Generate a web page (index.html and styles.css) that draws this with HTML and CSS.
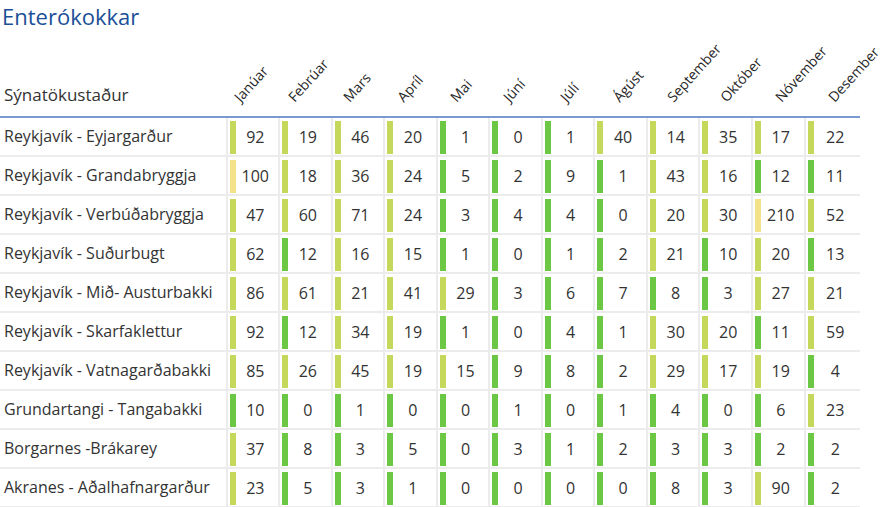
FILE: index.html
```html
<!DOCTYPE html>
<html lang="is">
<head>
<meta charset="utf-8">
<title>Enterókokkar</title>
<link rel="stylesheet" href="styles.css">
</head>
<body>
<h1 class="title">Enterókokkar</h1>
<div class="grid">
  <div class="row head">
    <div class="site-h">Sýnatökustaður</div>
    <div class="mh"><span class="rot">Janúar</span></div>
    <div class="mh"><span class="rot">Febrúar</span></div>
    <div class="mh"><span class="rot">Mars</span></div>
    <div class="mh"><span class="rot">Apríl</span></div>
    <div class="mh"><span class="rot">Mai</span></div>
    <div class="mh"><span class="rot">Júní</span></div>
    <div class="mh"><span class="rot">Júlí</span></div>
    <div class="mh"><span class="rot">Ágúst</span></div>
    <div class="mh"><span class="rot">September</span></div>
    <div class="mh"><span class="rot">Október</span></div>
    <div class="mh"><span class="rot">Nóvember</span></div>
    <div class="mh"><span class="rot">Desember</span></div>
  </div>
  <div class="row">
    <div class="site">Reykjavík - Eyjargarður</div>
    <div class="c y"><span>92</span></div><div class="c y"><span>19</span></div><div class="c y"><span>46</span></div><div class="c y"><span>20</span></div><div class="c g"><span>1</span></div><div class="c g"><span>0</span></div><div class="c g"><span>1</span></div><div class="c y"><span>40</span></div><div class="c y"><span>14</span></div><div class="c y"><span>35</span></div><div class="c y"><span>17</span></div><div class="c y"><span>22</span></div>
  </div>
  <div class="row">
    <div class="site">Reykjavík - Grandabryggja</div>
    <div class="c p"><span>100</span></div><div class="c y"><span>18</span></div><div class="c y"><span>36</span></div><div class="c y"><span>24</span></div><div class="c g"><span>5</span></div><div class="c g"><span>2</span></div><div class="c g"><span>9</span></div><div class="c g"><span>1</span></div><div class="c y"><span>43</span></div><div class="c y"><span>16</span></div><div class="c g"><span>12</span></div><div class="c g"><span>11</span></div>
  </div>
  <div class="row">
    <div class="site">Reykjavík - Verbúðabryggja</div>
    <div class="c y"><span>47</span></div><div class="c y"><span>60</span></div><div class="c y"><span>71</span></div><div class="c y"><span>24</span></div><div class="c g"><span>3</span></div><div class="c g"><span>4</span></div><div class="c g"><span>4</span></div><div class="c g"><span>0</span></div><div class="c y"><span>20</span></div><div class="c y"><span>30</span></div><div class="c p"><span>210</span></div><div class="c y"><span>52</span></div>
  </div>
  <div class="row">
    <div class="site">Reykjavík - Suðurbugt</div>
    <div class="c y"><span>62</span></div><div class="c g"><span>12</span></div><div class="c y"><span>16</span></div><div class="c y"><span>15</span></div><div class="c g"><span>1</span></div><div class="c g"><span>0</span></div><div class="c g"><span>1</span></div><div class="c g"><span>2</span></div><div class="c y"><span>21</span></div><div class="c g"><span>10</span></div><div class="c y"><span>20</span></div><div class="c g"><span>13</span></div>
  </div>
  <div class="row">
    <div class="site">Reykjavík - Mið- Austurbakki</div>
    <div class="c y"><span>86</span></div><div class="c y"><span>61</span></div><div class="c y"><span>21</span></div><div class="c y"><span>41</span></div><div class="c y"><span>29</span></div><div class="c g"><span>3</span></div><div class="c g"><span>6</span></div><div class="c g"><span>7</span></div><div class="c g"><span>8</span></div><div class="c g"><span>3</span></div><div class="c y"><span>27</span></div><div class="c y"><span>21</span></div>
  </div>
  <div class="row">
    <div class="site">Reykjavík - Skarfaklettur</div>
    <div class="c y"><span>92</span></div><div class="c g"><span>12</span></div><div class="c y"><span>34</span></div><div class="c y"><span>19</span></div><div class="c g"><span>1</span></div><div class="c g"><span>0</span></div><div class="c g"><span>4</span></div><div class="c g"><span>1</span></div><div class="c y"><span>30</span></div><div class="c y"><span>20</span></div><div class="c g"><span>11</span></div><div class="c y"><span>59</span></div>
  </div>
  <div class="row">
    <div class="site">Reykjavík - Vatnagarðabakki</div>
    <div class="c y"><span>85</span></div><div class="c y"><span>26</span></div><div class="c y"><span>45</span></div><div class="c y"><span>19</span></div><div class="c y"><span>15</span></div><div class="c g"><span>9</span></div><div class="c g"><span>8</span></div><div class="c g"><span>2</span></div><div class="c y"><span>29</span></div><div class="c y"><span>17</span></div><div class="c y"><span>19</span></div><div class="c g"><span>4</span></div>
  </div>
  <div class="row">
    <div class="site">Grundartangi - Tangabakki</div>
    <div class="c g"><span>10</span></div><div class="c g"><span>0</span></div><div class="c g"><span>1</span></div><div class="c g"><span>0</span></div><div class="c g"><span>0</span></div><div class="c g"><span>1</span></div><div class="c g"><span>0</span></div><div class="c g"><span>1</span></div><div class="c g"><span>4</span></div><div class="c g"><span>0</span></div><div class="c g"><span>6</span></div><div class="c y"><span>23</span></div>
  </div>
  <div class="row">
    <div class="site">Borgarnes -Brákarey</div>
    <div class="c y"><span>37</span></div><div class="c g"><span>8</span></div><div class="c g"><span>3</span></div><div class="c g"><span>5</span></div><div class="c g"><span>0</span></div><div class="c g"><span>3</span></div><div class="c g"><span>1</span></div><div class="c g"><span>2</span></div><div class="c g"><span>3</span></div><div class="c g"><span>3</span></div><div class="c g"><span>2</span></div><div class="c g"><span>2</span></div>
  </div>
  <div class="row">
    <div class="site">Akranes - Aðalhafnargarður</div>
    <div class="c y"><span>23</span></div><div class="c g"><span>5</span></div><div class="c g"><span>3</span></div><div class="c g"><span>1</span></div><div class="c g"><span>0</span></div><div class="c g"><span>0</span></div><div class="c g"><span>0</span></div><div class="c g"><span>0</span></div><div class="c g"><span>8</span></div><div class="c g"><span>3</span></div><div class="c y"><span>90</span></div><div class="c g"><span>2</span></div>
  </div>
</div>
</body>
</html>
```

FILE: styles.css
```css
* { box-sizing: border-box; }
html, body { margin: 0; padding: 0; background: #fff; }
body {
  font-family: "Open Sans", "Noto Sans", sans-serif;
  color: #333;
  overflow: hidden;
}
.title {
  margin: 1px 0 0 2px;
  font-size: 22px;
  font-weight: 400;
  line-height: 30px;
  color: #1b4f97;
}
.grid { width: 860px; }
.row {
  display: grid;
  grid-template-columns: 225.5px repeat(11, 52.55px) 1fr;
  height: 39px;
  border-bottom: 2px solid #ececec;
}
.row.head {
  height: 87px;
  border-bottom: 2px solid #7b9bd0;
}
.site-h {
  align-self: end;
  font-size: 17px;
  line-height: 22px;
  padding: 0 0 10px 4px;
}
.mh {
  display: flex;
  align-items: flex-end;
  padding-bottom: 11px;
}
.rot {
  display: block;
  flex: none;
  font-size: 14px;
  line-height: 16px;
  color: #262626;
  white-space: nowrap;
  transform-origin: 0 100%;
  transform: rotate(-48deg);
  margin-left: 17.4px;
}
.mh:nth-child(3) .rot { margin-left: 18.9px; }
.mh:nth-child(4) .rot { margin-left: 21.3px; }
.mh:nth-child(5) .rot { margin-left: 22.8px; }
.mh:nth-child(6) .rot { margin-left: 23.2px; }
.mh:nth-child(7) .rot { margin-left: 23.7px; }
.mh:nth-child(8) .rot { margin-left: 27.8px; }
.mh:nth-child(9) .rot { margin-left: 28.6px; }
.mh:nth-child(10) .rot { margin-left: 30px; }
.mh:nth-child(11) .rot { margin-left: 30.2px; }
.mh:nth-child(12) .rot { margin-left: 32.6px; }
.mh:nth-child(13) .rot { margin-left: 33.4px; }
.site {
  font-size: 16px;
  line-height: 37px;
  padding-left: 4px;
  white-space: nowrap;
}
.c {
  display: flex;
  border-left: 2px solid #ececec;
  padding: 3px 3px 1px 2px;
  font-size: 16px;
}
.c::before {
  content: "";
  width: 6px;
  flex: none;
}
.c.g::before { background: #6cc744; }
.c.y::before { background: #c5d85b; }
.c.p::before { background: #f4e28a; }
.c span {
  flex: 1;
  text-align: center;
  line-height: 33px;
}
```
